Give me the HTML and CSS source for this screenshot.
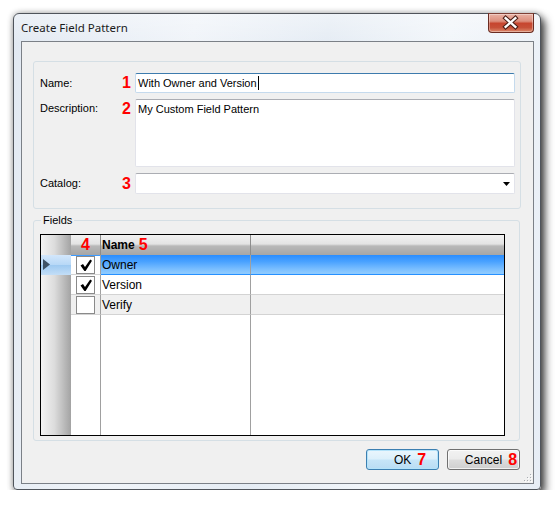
FILE: index.html
```html
<!DOCTYPE html>
<html lang="en">
<head>
    <meta charset="UTF-8">
    <title>Create Field Pattern</title>
    <link rel="stylesheet" href="styles.css">
</head>
<body>
    <div class="window">
        <div class="titlebar">
            <span class="title">Create Field Pattern</span>
            <button class="close-btn">
                <svg width="46" height="20" viewBox="0 0 46 20">
                    <path d="M18 5 L28 14 M28 5 L18 14" stroke="#4a1e16" stroke-width="4.6" stroke-linecap="square"/>
                    <path d="M18 5 L28 14 M28 5 L18 14" stroke="#ffffff" stroke-width="2.4" stroke-linecap="square"/>
                </svg>
            </button>
        </div>
        <div class="client">
            <div class="group">
                <label class="lbl">Name:</label>
                <span class="num">1</span>
                <div class="textbox focused">With Owner and Version<span class="caret"></span></div>

                <label class="lbl lbl-top">Description:</label>
                <span class="num num-top">2</span>
                <div class="textbox multi">My Custom Field Pattern</div>

                <label class="lbl">Catalog:</label>
                <span class="num">3</span>
                <div class="textbox combo">
                    <svg width="7" height="4" viewBox="0 0 7 4"><polygon points="0,0 7,0 3.5,4" fill="#000"/></svg>
                </div>
            </div>

            <fieldset class="fields">
                <legend>Fields</legend>
                <div class="datagrid">
                    <div class="rh"></div>
                    <div class="hd hd-check"><span class="num">4</span></div>
                    <div class="hd hd-name">Name <span class="num">5</span></div>
                    <div class="hd hd-last"></div>

                    <div class="rh rh-sel">
                        <svg width="7" height="11" viewBox="0 0 7 11"><polygon points="0,0 7,5.5 0,11" fill="#3f5366"/></svg>
                    </div>
                    <div class="cell check sel-check"><span class="box"><svg width="16" height="16" viewBox="0 0 16 16"><path d="M2.5 8.5 L5 7 L7 10 L12.2 2.5 L14 3.8 L7.6 14 L6.4 14 Z" fill="#000"/></svg></span></div>
                    <div class="cell name sel">Owner</div>
                    <div class="cell last sel"></div>

                    <div class="rh"></div>
                    <div class="cell check"><span class="box"><svg width="16" height="16" viewBox="0 0 16 16"><path d="M2.5 8.5 L5 7 L7 10 L12.2 2.5 L14 3.8 L7.6 14 L6.4 14 Z" fill="#000"/></svg></span></div>
                    <div class="cell name">Version</div>
                    <div class="cell last"></div>

                    <div class="rh"></div>
                    <div class="cell check alt"><span class="box"></span></div>
                    <div class="cell name alt">Verify</div>
                    <div class="cell last alt"></div>

                    <div class="rh"></div>
                    <div class="fill check"></div>
                    <div class="fill name"></div>
                    <div class="fill"></div>
                </div>
            </fieldset>

            <div class="footer">
                <button class="btn default">OK<span class="num btn-num">7</span></button>
                <button class="btn">Cancel<span class="num btn-num">8</span></button>
                <svg class="grip" width="9" height="9" viewBox="0 0 9 9">
                    <g fill="#ffffff">
                        <rect x="8" y="2" width="1" height="1"/><rect x="5" y="5" width="1" height="1"/><rect x="8" y="5" width="1" height="1"/>
                        <rect x="2" y="8" width="1" height="1"/><rect x="5" y="8" width="1" height="1"/><rect x="8" y="8" width="1" height="1"/>
                    </g>
                    <g fill="#a9adb3">
                        <rect x="7" y="1" width="1" height="1"/><rect x="4" y="4" width="1" height="1"/><rect x="7" y="4" width="1" height="1"/>
                        <rect x="1" y="7" width="1" height="1"/><rect x="4" y="7" width="1" height="1"/><rect x="7" y="7" width="1" height="1"/>
                    </g>
                </svg>
            </div>
        </div>
    </div>
</body>
</html>
```

FILE: styles.css
```css
body {
    margin: 0;
    background: #ffffff;
    font-family: "Liberation Sans", Arial, sans-serif;
    font-size: 11px;
    color: #000;
}
.window {
    box-sizing: border-box;
    width: 528px;
    height: 477px;
    margin: 13px 0 0 13px;
    padding: 0 6px 5px 7px;
    display: flex;
    flex-direction: column;
    border: 1px solid #4f545b;
    border-radius: 6px 6px 4px 4px;
    background:
        linear-gradient(180deg, rgba(255, 255, 255, 0.35), rgba(255, 255, 255, 0) 30px),
        linear-gradient(100deg, #e2e9f2 0%, #f0f4f9 30%, #e5ecf4 52%, #f2f6fa 72%, #e7edf5 100%);
    box-shadow: 4px 5px 8px rgba(0, 0, 0, 0.72), 0 0 6px rgba(0, 0, 0, 0.3);
}
.titlebar {
    height: 27px;
    flex: none;
    display: flex;
    align-items: center;
    justify-content: space-between;
}
.title {
    font-family: "Noto Sans", "Open Sans", sans-serif;
    font-size: 11.5px;
    color: #1a1a1a;
}
.close-btn {
    align-self: flex-start;
    margin-top: -1px;
    width: 46px;
    height: 20px;
    padding: 0;
    border: 1px solid #6a2c22;
    border-top-color: #7e4036;
    border-radius: 0 0 4px 4px;
    background: linear-gradient(180deg, #eab2a5 0%, #dc8e7c 40%, #c7462f 52%, #c65038 75%, #dd8a6c 100%);
    box-shadow: inset 0 0 0 1px rgba(255, 255, 255, 0.35);
    display: flex;
}
.close-btn svg {
    margin: -1px 0 0 -1px;
}
.client {
    flex: 1;
    border: 1px solid #7b8087;
    background: #f0f0f0;
    display: flex;
    flex-direction: column;
}
.group {
    margin: 19px 12px 0 11px;
    padding: 11px 5px 14px 6px;
    height: 148px;
    box-sizing: border-box;
    border: 1px solid #d5dfe5;
    border-radius: 3px;
    display: grid;
    grid-template-columns: 82px 13px 380px;
    grid-template-rows: 20px 68px 21px;
    row-gap: 6px;
}
.lbl {
    align-self: center;
    line-height: 13px;
}
.lbl-top {
    align-self: start;
    padding-top: 3px;
}
.num {
    font-size: 16px;
    font-weight: bold;
    color: #ff0000;
    line-height: 20px;
}
.group .num {
    align-self: center;
}
.group .num-top {
    align-self: start;
}
.textbox {
    box-sizing: border-box;
    background: #fff;
    border: 1px solid #e2e3ea;
    border-top-color: #abadb3;
    border-radius: 2px;
    padding: 0 2px;
    line-height: 18px;
    display: flex;
    align-items: center;
}
.textbox.focused {
    border-color: #c5daed;
    border-top-color: #3d7bad;
}
.caret {
    display: inline-block;
    width: 1px;
    height: 14px;
    background: #000;
    margin-left: 1px;
}
.textbox.multi {
    align-items: flex-start;
    padding-top: 3px;
    line-height: 13px;
}
.textbox.combo {
    justify-content: flex-end;
    padding-right: 4px;
}
.fields {
    margin: 4px 13px 0 11px;
    padding: 7px 14px 4px 6px;
    border: 1px solid #d5dfe5;
    border-radius: 3px;
    min-width: 0;
}
.fields legend {
    padding: 0 2px;
    margin-left: 1px;
    line-height: 14px;
}
.datagrid {
    box-sizing: border-box;
    height: 202px;
    border: 1px solid #000;
    background: #fff;
    display: grid;
    grid-template-columns: 30px 30px 150px 1fr;
    grid-template-rows: 20px 20px 20px 20px 1fr;
}
.rh {
    background: linear-gradient(90deg, #f4f4f4 0%, #dcdcdc 45%, #a3a3a3 100%);
}
.rh-sel {
    background: linear-gradient(180deg, #d3e7fb 0%, #b7d8f6 50%, #9fcaf1 52%, #c3def7 100%);
    display: flex;
    align-items: center;
    padding: 0 0 1px 2px;
}
.hd {
    box-sizing: border-box;
    background: linear-gradient(180deg, #f2f2f2 0%, #e3e3e3 45%, #b8b8b8 55%, #a6a6a6 100%);
    display: flex;
    align-items: center;
}
.hd-check {
    border-right: 1px solid #8d8d8d;
    justify-content: center;
}
.hd-name {
    border-right: 1px solid #8d8d8d;
    font-weight: bold;
    font-size: 12px;
    padding-left: 1px;
    gap: 4px;
}
.cell {
    box-sizing: border-box;
    border-bottom: 1px solid #d3d3d3;
    display: flex;
    align-items: center;
}
.cell.name {
    border-right: 1px solid #a0a0a0;
    padding-left: 1px;
    font-size: 12px;
}
.check {
    border-right: 1px solid #a0a0a0;
    justify-content: center;
}
.cell.alt {
    background: #f0f0f0;
}
.cell.sel {
    background: linear-gradient(180deg, #2a8dff 0%, #4aa2ff 35%, #7bbfff 75%, #8dcaff 95%);
    border-bottom-color: #2690ff;
}
.sel-check {
    box-shadow: inset 0 1px 0 #3d9bff;
}
.box {
    box-sizing: border-box;
    width: 19px;
    height: 18px;
    border: 1px solid #8a8a8a;
    background: #fff;
    display: flex;
    align-items: center;
    justify-content: center;
}
.fill.check,
.fill.name {
    border-right: 1px solid #a0a0a0;
}
.footer {
    position: relative;
    margin-top: 8px;
    height: 34px;
    padding-right: 13px;
    display: flex;
    justify-content: flex-end;
    align-items: flex-start;
    gap: 8px;
}
.btn {
    box-sizing: border-box;
    width: 73px;
    height: 21px;
    padding: 0;
    font-family: "Liberation Sans", Arial, sans-serif;
    font-size: 12px;
    color: #000;
    border: 1px solid #707070;
    border-radius: 3px;
    background: linear-gradient(180deg, #f2f2f2 0%, #ebebeb 48%, #dddddd 52%, #cfcfcf 100%);
    box-shadow: inset 0 0 0 1px rgba(255, 255, 255, 0.7);
    display: flex;
    align-items: center;
    justify-content: center;
}
.btn.default {
    border-color: #3c7fb1;
    box-shadow: inset 0 0 0 1px #b4e3fa;
    background: linear-gradient(180deg, #eaf6fd 0%, #dcf0fb 48%, #c6e5f8 52%, #b9dcf3 100%);
}
.btn-num {
    margin-left: 6px;
    margin-right: -15px;
}
.grip {
    position: absolute;
    right: 1px;
    bottom: 1px;
}
```
